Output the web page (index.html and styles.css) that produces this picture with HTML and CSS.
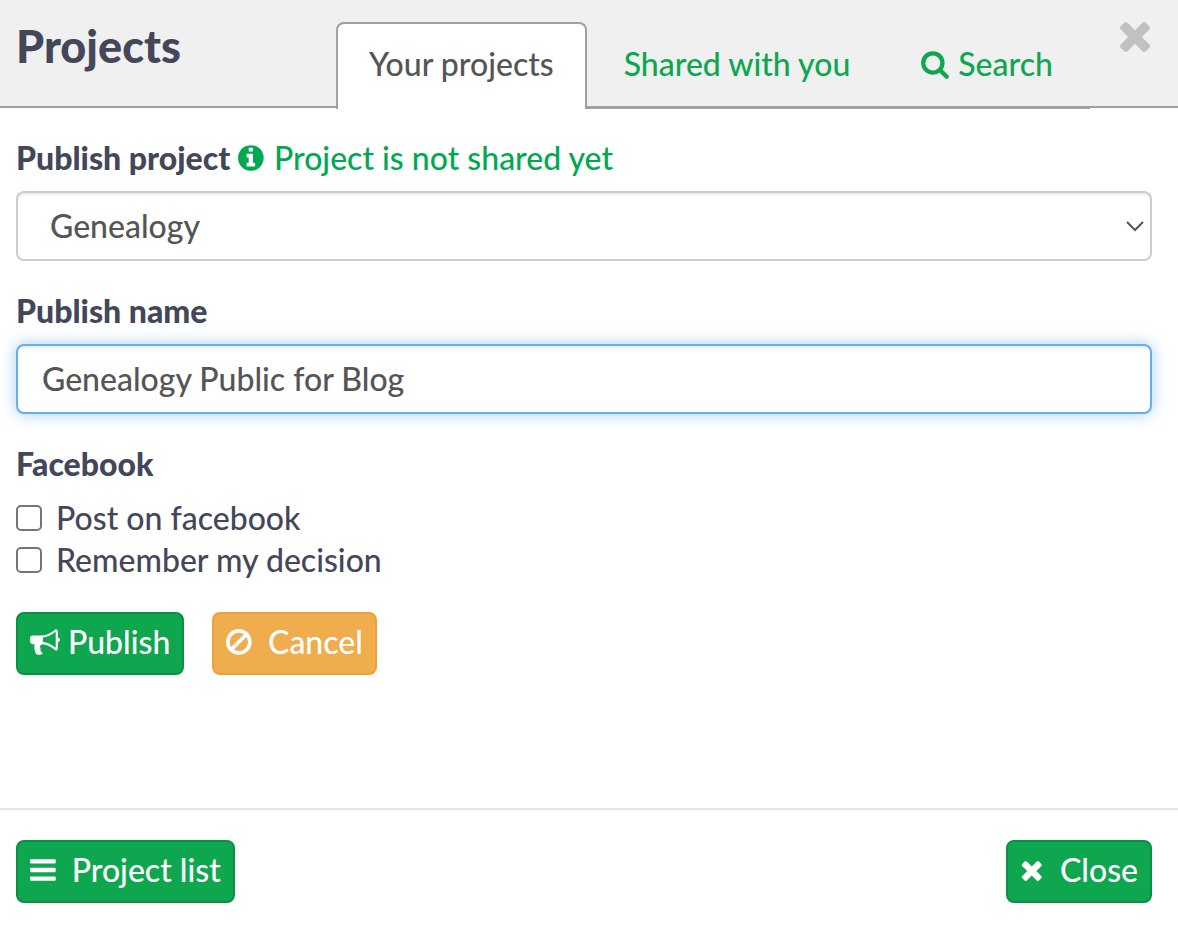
FILE: index.html
```html
<!DOCTYPE html>
<html lang="en">
<head>
    <meta charset="UTF-8">
    <meta name="viewport" content="width=device-width, initial-scale=1.0">
    <title>Projects</title>
    <link rel="stylesheet" href="styles.css">
</head>
<body>
    <div class="dialog">
        <header class="dialog-header">
            <h1>Projects</h1>
            <nav class="tabs">
                <a href="#projects" class="tab active">Your projects</a>
                <a href="#shared" class="tab">Shared with you</a>
                <a href="#search" class="tab">
                    <svg class="icon" viewBox="0 0 1792 1792"><path d="M1216 832q0-185-131.500-316.500t-316.500-131.500-316.500 131.500-131.500 316.500 131.500 316.500 316.500 131.500 316.500-131.500 131.500-316.500zm512 832q0 52-38 90t-90 38q-54 0-90-38l-343-342q-179 124-399 124-143 0-273.500-55.500t-225-150-150-225-55.500-273.500 55.500-273.500 150-225 225-150 273.500-55.500 273.500 55.500 225 150 150 225 55.500 273.500q0 220-124 399l343 343q37 37 37 90z"/></svg>
                    Search
                </a>
            </nav>
            <button type="button" class="dismiss" aria-label="Dismiss">
                <svg viewBox="302 302 1188 1188"><path d="M1490 1322q0 40-28 68l-136 136q-28 28-68 28t-68-28l-294-294-294 294q-28 28-68 28t-68-28l-136-136q-28-28-28-68t28-68l294-294-294-294q-28-28-28-68t28-68l136-136q28-28 68-28t68 28l294 294 294-294q28-28 68-28t68 28l136 136q28 28 28 68t-28 68l-294 294 294 294q28 28 28 68z" transform="translate(0 -64)"/></svg>
            </button>
        </header>

        <form class="dialog-body" id="publishForm">
            <div class="form-group">
                <div class="label-row">
                    <label for="project">Publish project</label>
                    <span class="status">
                        <svg class="icon" viewBox="128 0 1536 1792"><path d="M1152 1376v-160q0-14-9-23t-23-9h-96v-512q0-14-9-23t-23-9h-320q-14 0-23 9t-9 23v160q0 14 9 23t23 9h96v320h-96q-14 0-23 9t-9 23v160q0 14 9 23t23 9h448q14 0 23-9t9-23zm-128-896v-160q0-14-9-23t-23-9h-192q-14 0-23 9t-9 23v160q0 14 9 23t23 9h192q14 0 23-9t9-23zm640 416q0 209-103 385.500t-279.500 279.500-385.500 103-385.500-103-279.500-279.500-103-385.500 103-385.500 279.500-279.500 385.500-103 385.500 103 279.500 279.500 103 385.500z"/></svg>
                        Project is not shared yet
                    </span>
                </div>
                <div class="select-wrap">
                    <select id="project" name="project" class="form-control">
                        <option>Genealogy</option>
                    </select>
                    <svg class="chevron" viewBox="0 0 18 12"><path d="M1 2l8 8 8-8"/></svg>
                </div>
            </div>

            <div class="form-group">
                <div class="label-row">
                    <label for="publishName">Publish name</label>
                </div>
                <input type="text" id="publishName" name="publishName" class="form-control focused" value="Genealogy Public for Blog">
            </div>

            <fieldset>
                <legend>Facebook</legend>
                <label class="check"><input type="checkbox" name="post"> Post on facebook</label>
                <label class="check"><input type="checkbox" name="remember"> Remember my decision</label>
            </fieldset>

            <div class="actions">
                <button type="button" class="btn btn-publish">
                    <svg class="icon" viewBox="0 0 1792 1792"><path d="M1664 640q53 0 90.500 37.500t37.500 90.500-37.500 90.500-90.500 37.500v384q0 52-38 90t-90 38q-417-347-812-380-58 19-91 66t-31 100.500 40 92.500q-20 33-23 65.500t6 58 33.500 55 48 50 61.500 50.500q-29 58-111.500 83t-168.500 11.500-132-55.500q-7-23-29.500-87.500t-32-94.500-23-89-15-101 3.500-98.500 22-110.500h-122q-66 0-113-47t-47-113v-192q0-66 47-113t113-47h480q435 0 896-384 52 0 90 38t38 90v384zm-128 604v-954q-394 302-768 343v270q377 42 768 341z"/></svg>
                    Publish
                </button>
                <button type="button" class="btn btn-warning">
                    <svg class="icon" viewBox="128 0 1536 1792"><path d="M1440 893q0-161-87-295l-754 753q137 89 297 89 111 0 211.500-43.500t173.500-116.500 116-174.500 43-212.500zm-999 299l755-754q-135-91-300-91-148 0-273 73t-198 199-73 274q0 162 89 299zm1223-299q0 157-61 300t-163.500 246-245 164-298.500 61-298.500-61-245-164-163.500-246-61-300 61-299.500 163.500-245.500 245-164 298.500-61 298.500 61 245 164 163.500 245.500 61 299.500z"/></svg>
                    Cancel
                </button>
            </div>
        </form>

        <footer class="dialog-footer">
            <button type="button" class="btn">
                <svg class="icon" viewBox="128 0 1536 1792"><path d="M1664 1344v128q0 26-19 45t-45 19h-1408q-26 0-45-19t-19-45v-128q0-26 19-45t45-19h1408q26 0 45 19t19 45zm0-512v128q0 26-19 45t-45 19h-1408q-26 0-45-19t-19-45v-128q0-26 19-45t45-19h1408q26 0 45 19t19 45zm0-512v128q0 26-19 45t-45 19h-1408q-26 0-45-19t-19-45v-128q0-26 19-45t45-19h1408q26 0 45 19t19 45z"/></svg>
                Project list
            </button>
            <button type="button" class="btn">
                <svg class="icon" viewBox="192 0 1408 1792"><path d="M1490 1322q0 40-28 68l-136 136q-28 28-68 28t-68-28l-294-294-294 294q-28 28-68 28t-68-28l-136-136q-28-28-28-68t28-68l294-294-294-294q-28-28-28-68t28-68l136-136q28-28 68-28t68 28l294 294 294-294q28-28 68-28t68 28l136 136q28 28 28 68t-28 68l-294 294 294 294q28 28 28 68z"/></svg>
                Close
            </button>
        </footer>
    </div>
</body>
</html>
```
FILE: styles.css
```css
* { box-sizing: border-box; }
body { margin: 0; background: #fff; color: #434759; font-family: Lato, sans-serif; font-size: 32px; font-weight: 500; line-height: 42px; }
button, input, select { font: inherit; }
svg { fill: currentColor; }
.icon { height: 30px; flex: none; }

.dialog { display: flex; flex-direction: column; min-height: 100vh; }

.dialog-header { display: flex; align-items: flex-start; padding: 22px 26px 0 16px; background: #f0f0f0; border-bottom: 2px solid #a0a0a0; }
h1 { width: 320px; margin: 0; font-size: 45px; font-weight: 900; line-height: 48px; }
.tabs { display: flex; margin-bottom: -3px; border-bottom: 2px solid #a0a0a0; }
.tab { display: flex; align-items: center; gap: 8px; height: 85px; margin-right: 4px; padding: 0 31px 4px; border: 2px solid transparent; border-bottom: 0; color: #0ea750; text-decoration: none; }
.tab.active { height: 87px; margin: 0 4px -2px 0; padding-bottom: 6px; background: #fff; border-color: #a0a0a0; border-radius: 8px 8px 0 0; color: #555; }
.dismiss { width: 32px; height: 30px; margin-left: auto; padding: 0; background: none; border: 0; color: #c1c1c1; cursor: pointer; }
.dismiss svg { display: block; width: 30px; height: 30px; }

.dialog-body { flex: 1; padding: 29px 26px 30px 16px; }
.form-group { margin-bottom: 29px; }
.label-row { display: flex; gap: 8px; margin-bottom: 12px; }
.label-row label, legend { font-weight: 900; }
.status { display: flex; align-items: center; gap: 10px; color: #00a950; }
.form-control { display: block; width: 100%; height: 70px; padding: 0 24px 2px; background: #fff; border: 2px solid #ccc; border-radius: 8px; box-shadow: inset 0 2px 2px rgba(0, 0, 0, 0.08); color: #555; outline: none; }
.form-control.focused { border-color: #66afe9; box-shadow: inset 0 2px 2px rgba(0, 0, 0, 0.08), 0 0 16px rgba(102, 175, 233, 0.6); }
.select-wrap { position: relative; }
select.form-control { padding: 0 32px; appearance: none; }
.chevron { position: absolute; top: 29px; right: 8px; width: 18px; height: 12px; fill: none; stroke: #555; stroke-width: 2; pointer-events: none; }

fieldset { margin: 0; padding: 0; border: 0; }
legend { margin-bottom: 12px; padding: 0; }
.check { display: flex; align-items: center; gap: 14px; }
.check input { width: 26px; height: 26px; margin: 0; appearance: none; background: #fff; border: 2px solid #767676; border-radius: 5px; }

.actions { display: flex; gap: 28px; margin-top: 31px; }
.btn { display: flex; align-items: center; gap: 16px; height: 63px; padding: 0 12px 4px; background: #0ea750; border: 2px solid #0b8f44; border-radius: 8px; color: #fff; cursor: pointer; }
.btn-publish { gap: 8px; }
.btn-warning { background: #f0ad4e; border-color: #eea236; }

.dialog-footer { display: flex; justify-content: space-between; padding: 30px 26px 23px 16px; border-top: 2px solid #e5e5e5; }
```
